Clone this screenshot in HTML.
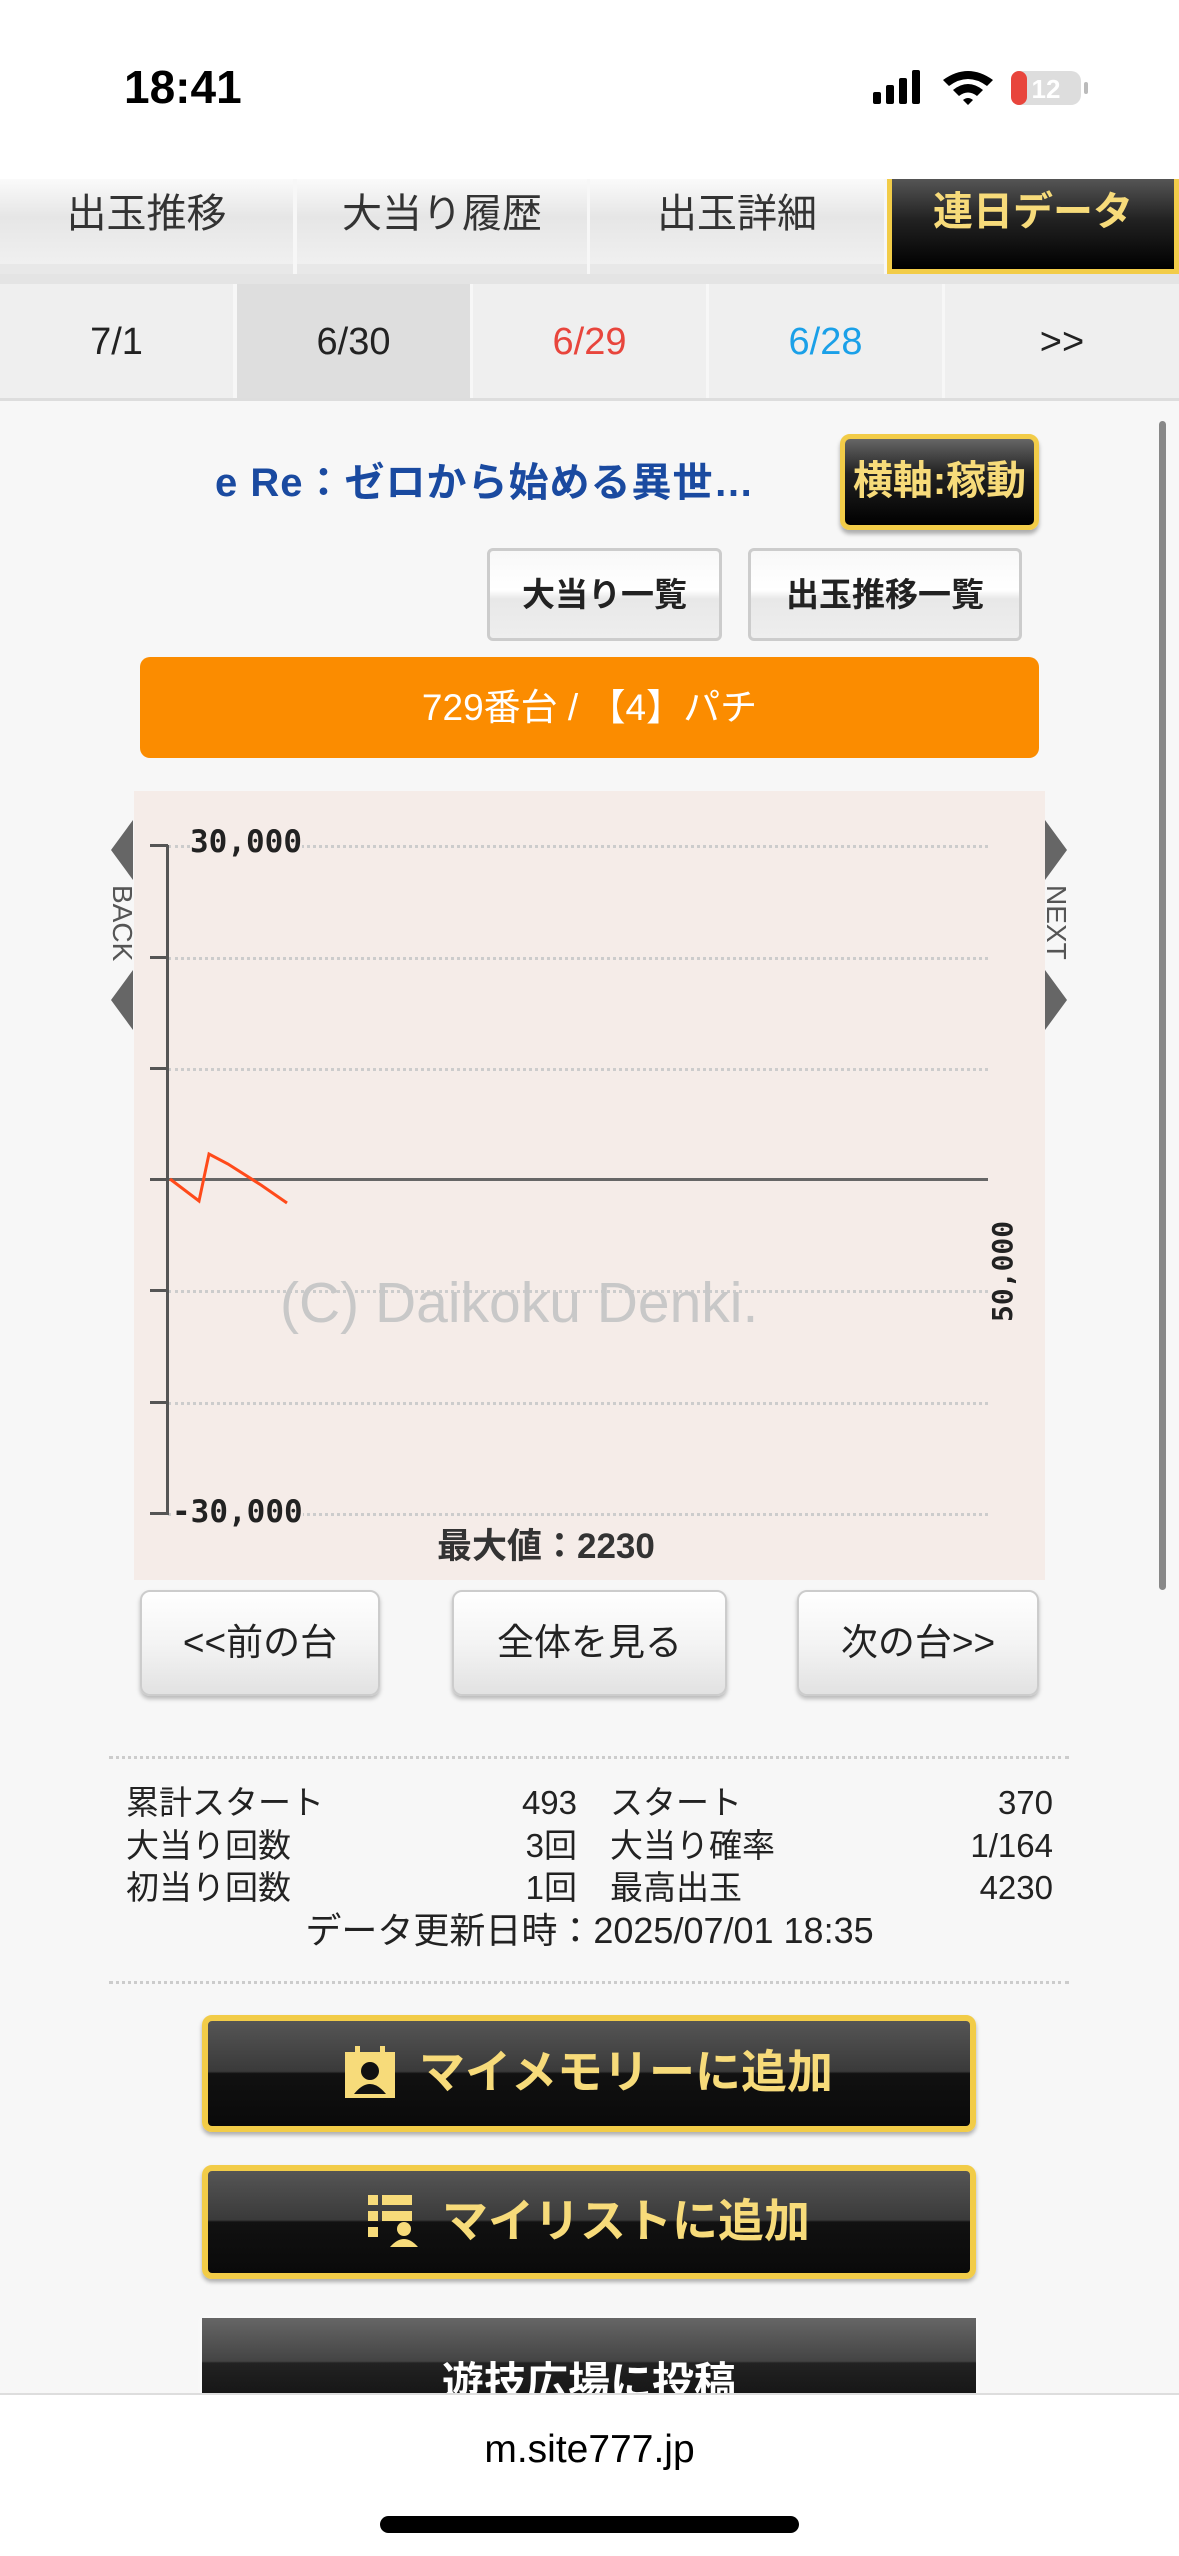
<!DOCTYPE html>
<html><head><meta charset="utf-8"><style>
*{margin:0;padding:0;box-sizing:border-box}
body{width:1179px;height:2556px;position:relative;background:#f7f7f7;font-family:"Liberation Sans","Noto Sans CJK JP",sans-serif;overflow:hidden;color:#222}
.a{position:absolute}
.tab{position:absolute;top:179px;height:95px;background:linear-gradient(#fafafa,#e6e6e6 45%,#f0f0f0);font-size:40px;color:#333;text-align:center;line-height:70px;border-bottom:10px solid #e8e8e8}
.dt{position:absolute;top:284px;height:116px;width:233px;background:#efefef;font-size:38px;text-align:center;line-height:116px;color:#222}
.gb{position:absolute;background:linear-gradient(#f8f8f8,#fff 45%,#e8e8e8 55%,#eee);border:3px solid #ccc;border-radius:6px;font-weight:bold;font-size:33px;text-align:center;color:#222}
.nb{position:absolute;top:1590px;height:106px;background:linear-gradient(#fff,#f4f4f4 50%,#e2e2e2);border:2px solid #ccc;border-radius:10px;box-shadow:0 3px 4px rgba(0,0,0,.25);font-size:37px;text-align:center;line-height:102px;color:#222}
.bb{position:absolute;left:202px;width:774px;border:6px solid #f2cc48;border-radius:10px;background:linear-gradient(#555,#3a3a3a 48%,#111 50%,#0a0a0a);color:#f7db7a;font-weight:bold;font-size:46px;text-align:center;box-shadow:0 3px 4px rgba(0,0,0,.3)}
.gl{position:absolute;left:168px;width:820px;border-top:3px dotted #ccc}
.tk{position:absolute;left:150px;width:18px;height:3px;background:#555}
.st{position:absolute;font-size:33px;line-height:40px;color:#222}
</style></head><body>
<div class="a" style="left:0;top:0;width:1179px;height:179px;background:#fff"></div>
<div class="a" style="left:124px;top:60px;font-size:46px;font-weight:bold;color:#000">18:41</div>
<svg class="a" style="left:873px;top:70px" width="220" height="36">
<rect x="0" y="22" width="8" height="12" rx="2" fill="#000"/><rect x="13" y="15" width="8" height="19" rx="2" fill="#000"/><rect x="26" y="8" width="8" height="26" rx="2" fill="#000"/><rect x="39" y="0" width="8" height="34" rx="2" fill="#000"/>
<path d="M70 10 Q95 -8 120 10 L114 16 Q95 2 76 16Z M80 20 Q95 8 110 20 L104 26 Q95 19 86 26Z M90 30 L95 35 L100 30 Q95 26 90 30Z" fill="#000"/>
<rect x="138" y="1" width="70" height="34" rx="10" fill="#ddd"/><rect x="138" y="1" width="16" height="34" rx="8" fill="#e8453c"/><rect x="211" y="12" width="4" height="12" rx="2" fill="#bbb"/>
<text x="173" y="28" font-size="26" font-weight="bold" fill="#fff" text-anchor="middle" font-family="Liberation Sans">12</text></svg>

<div class="tab" style="left:0;width:293px">出玉推移</div>
<div class="tab" style="left:297px;width:290px">大当り履歴</div>
<div class="tab" style="left:590px;width:294px">出玉詳細</div>
<div class="tab" style="left:887px;width:292px;background:linear-gradient(#555,#222 45%,#000);border:5px solid #f2cc48;border-top:none;color:#f7db7a;font-weight:bold;line-height:66px">連日データ</div>
<div class="a" style="left:0;top:274px;width:1179px;height:10px;background:#e4e4e4"></div>
<div class="dt" style="left:0">7/1</div>
<div class="dt" style="left:237px;background:#dedede">6/30</div>
<div class="dt" style="left:473px;color:#e8453c">6/29</div>
<div class="dt" style="left:709px;color:#1aa0e8">6/28</div>
<div class="dt" style="left:945px;width:234px">&gt;&gt;</div>
<div class="a" style="left:0;top:398px;width:1179px;height:3px;background:#ddd"></div>
<div class="a" style="left:1159px;top:421px;width:7px;height:1169px;border-radius:4px;background:#888"></div>

<div class="a" style="left:215px;top:450px;font-size:40px;font-weight:bold;color:#1a4aa0;letter-spacing:1px">e Re：ゼロから始める異世…</div>
<div class="a" style="left:840px;top:434px;width:199px;height:96px;border:5px solid #f2cc48;border-radius:10px;background:linear-gradient(#666,#222 40%,#000);color:#f7db7a;font-weight:bold;font-size:40px;text-align:center;line-height:84px;box-shadow:0 4px 4px rgba(0,0,0,.3)">横軸:稼動</div>
<div class="gb" style="left:487px;top:548px;width:235px;height:93px;line-height:87px">大当り一覧</div>
<div class="gb" style="left:748px;top:548px;width:274px;height:93px;line-height:87px">出玉推移一覧</div>
<div class="a" style="left:140px;top:657px;width:899px;height:101px;background:#fb8c00;border-radius:10px;color:#fff;font-size:37px;text-align:center;line-height:101px">729番台 / 【4】パチ</div>

<div class="a" style="left:134px;top:791px;width:911px;height:789px;background:#f5ece8"></div>
<svg class="a" style="left:111px;top:820px" width="24" height="230"><path d="M22 0 L0 30 L22 60Z M22 150 L0 180 L22 210Z" fill="#666"/></svg>
<div class="a" style="font-size:28px;color:#555;transform:rotate(90deg);transform-origin:left top;left:138px;top:885px">BACK</div>
<svg class="a" style="left:1045px;top:820px" width="24" height="230"><path d="M0 0 L22 30 L0 60Z M0 150 L22 180 L0 210Z" fill="#666"/></svg>
<div class="a" style="font-size:28px;color:#555;transform:rotate(90deg);transform-origin:left top;left:1072px;top:885px">NEXT</div>
<div class="gl" style="top:845px"></div><div class="gl" style="top:957px"></div><div class="gl" style="top:1068px"></div>
<div class="gl" style="top:1290px"></div><div class="gl" style="top:1402px"></div><div class="gl" style="top:1513px"></div>
<div class="a" style="left:168px;top:1178px;width:820px;height:3px;background:#666"></div>
<div class="a" style="left:166px;top:845px;width:3px;height:670px;background:#555"></div>
<div class="tk" style="top:844px"></div><div class="tk" style="top:956px"></div><div class="tk" style="top:1067px"></div><div class="tk" style="top:1178px"></div><div class="tk" style="top:1289px"></div><div class="tk" style="top:1401px"></div><div class="tk" style="top:1512px"></div>
<div class="a" style="left:190px;top:824px;font-size:31px;font-weight:bold;font-family:'DejaVu Sans Mono',monospace;color:#222;background:#f5ece8">30,000</div>
<div class="a" style="left:172px;top:1494px;font-size:31px;font-weight:bold;font-family:'DejaVu Sans Mono',monospace;color:#222;background:#f5ece8">-30,000</div>
<div class="a" style="left:280px;top:1270px;font-size:57px;color:#c8c8c8">(C) Daikoku Denki.</div>
<div class="a" style="font-size:28px;font-weight:bold;font-family:'DejaVu Sans Mono',monospace;color:#222;transform:rotate(-90deg);transform-origin:left top;left:986px;top:1322px">50,000</div>
<svg class="a" style="left:0;top:0" width="400" height="1300"><polyline points="170,1179 199,1201 209,1154 228,1164 261,1185 287,1203" fill="none" stroke="#ff4a1a" stroke-width="3"/></svg>
<div class="a" style="left:437px;top:1518px;font-size:35px;font-weight:bold;color:#333">最大値：2230</div>

<div class="nb" style="left:140px;width:240px">&lt;&lt;前の台</div>
<div class="nb" style="left:452px;width:275px">全体を見る</div>
<div class="nb" style="left:797px;width:242px">次の台&gt;&gt;</div>

<div class="a" style="left:109px;top:1756px;width:960px;border-top:3px dotted #ccc"></div>
<div class="st" style="left:126px;top:1783px">累計スタート</div><div class="st" style="left:440px;width:137px;text-align:right;top:1783px">493</div>
<div class="st" style="left:610px;top:1783px">スタート</div><div class="st" style="left:900px;width:153px;text-align:right;top:1783px">370</div>
<div class="st" style="left:126px;top:1826px">大当り回数</div><div class="st" style="left:440px;width:137px;text-align:right;top:1826px">3回</div>
<div class="st" style="left:610px;top:1826px">大当り確率</div><div class="st" style="left:900px;width:153px;text-align:right;top:1826px">1/164</div>
<div class="st" style="left:126px;top:1868px">初当り回数</div><div class="st" style="left:440px;width:137px;text-align:right;top:1868px">1回</div>
<div class="st" style="left:610px;top:1868px">最高出玉</div><div class="st" style="left:900px;width:153px;text-align:right;top:1868px">4230</div>
<div class="st" style="left:0;width:1179px;text-align:center;top:1911px;font-size:36px">データ更新日時：2025/07/01 18:35</div>
<div class="a" style="left:109px;top:1981px;width:960px;border-top:3px dotted #ccc"></div>

<div class="bb" style="top:2015px;height:117px;line-height:103px"><svg width="50" height="52" style="vertical-align:middle;margin-right:24px;position:relative;top:-4px"><rect x="0" y="6" width="50" height="46" fill="#f7db7a"/><rect x="10" y="0" width="5" height="14" fill="#f7db7a"/><rect x="35" y="0" width="5" height="14" fill="#f7db7a"/><circle cx="25" cy="25" r="9" fill="#111"/><path d="M9 48 Q25 28 41 48Z" fill="#111"/></svg>マイメモリーに追加</div>
<div class="bb" style="top:2165px;height:114px;line-height:100px"><svg width="50" height="52" style="vertical-align:middle;margin-right:24px;position:relative;top:-4px" fill="#f7db7a"><rect x="0" y="0" width="10" height="10"/><rect x="14" y="0" width="30" height="10"/><rect x="0" y="16" width="10" height="10"/><rect x="14" y="16" width="30" height="10"/><rect x="0" y="32" width="10" height="10"/><circle cx="36" cy="34" r="7"/><path d="M22 52 Q36 36 50 52Z"/></svg>マイリストに追加</div>
<div class="a" style="left:202px;top:2318px;width:774px;height:90px;background:linear-gradient(#666,#444 48%,#222 50%,#111);color:#fff;font-weight:bold;font-size:42px;text-align:center;line-height:130px;overflow:hidden;box-shadow:0 0 6px #fff">遊技広場に投稿</div>

<div class="a" style="left:0;top:2393px;width:1179px;height:163px;background:#fff;border-top:2px solid #ddd"></div>
<div class="a" style="left:0;width:1179px;top:2428px;text-align:center;font-size:39px;color:#000">m.site777.jp</div>
<div class="a" style="left:380px;top:2516px;width:419px;height:17px;border-radius:9px;background:#000"></div>
</body></html>
